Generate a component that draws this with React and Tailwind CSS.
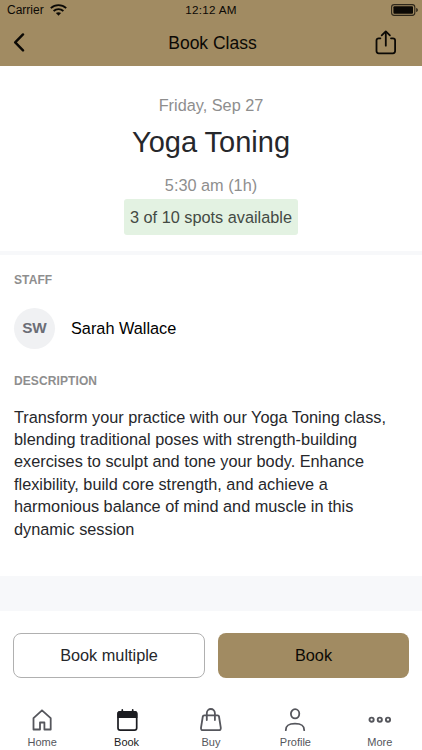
import React from "react";

const WifiIcon = () => (
  <svg width="17" height="12" viewBox="0 0 17 12" fill="none" stroke="#0b0905" strokeWidth="1.8">
    <path d="M0.8 4.1C5.2 0 11.8 0 16.2 4.1" />
    <path d="M3.6 7C6.4 4.4 10.6 4.4 13.4 7" />
    <path d="M8.5 11.7L5.9 9.1C7.3 7.8 9.7 7.8 11.1 9.1Z" fill="#0b0905" stroke="none" />
  </svg>
);

const BatteryIcon = () => (
  <svg width="28" height="12" viewBox="0 0 28 12" fill="none">
    <rect x="0.6" y="0.6" width="23.2" height="10.8" rx="2.6" stroke="#2d271b" strokeWidth="1.1" />
    <rect x="2.4" y="2.3" width="19.6" height="7.4" rx="1" fill="#0b0905" />
    <path d="M25.2 4C27.4 4.4 27.4 7.6 25.2 8Z" fill="#2d271b" />
  </svg>
);

const BackIcon = () => (
  <svg width="12" height="20" viewBox="0 0 12 20" fill="none" stroke="#0b0905" strokeWidth="2.4" strokeLinecap="round" strokeLinejoin="round">
    <path d="M10 1.4L2.2 9.4L10 17.4" />
  </svg>
);

const ShareIcon = () => (
  <svg width="22" height="26" viewBox="0 0 22 26" fill="none" stroke="#0b0905" strokeWidth="1.8" strokeLinecap="round" strokeLinejoin="round">
    <path d="M5.4 8.3H3.7A2.2 2.2 0 0 0 1.5 10.5V21.1A2.2 2.2 0 0 0 3.7 23.3H17.9A2.2 2.2 0 0 0 20.1 21.1V10.5A2.2 2.2 0 0 0 17.9 8.3H16" />
    <path d="M10.8 15.7V2" />
    <path d="M6.7 5.4L10.8 1.4L14.9 5.4" />
  </svg>
);

const HomeIcon = () => (
  <svg width="24" height="24" viewBox="0 0 24 24" fill="none" stroke="#55565c" strokeWidth="1.8" strokeLinejoin="round">
    <path d="M3.5 10.2L12 2.3L20.7 10.2V21.5H14.4V14.5H10V21.5H3.5Z" />
  </svg>
);

const BookIcon = () => (
  <svg width="24" height="24" viewBox="0 0 24 24" fill="none" stroke="#1b1c21" strokeWidth="1.7" strokeLinecap="round">
    <rect x="3" y="3.9" width="18.7" height="18.2" rx="2.2" />
    <path d="M2.4 9.9V5.8A2.6 2.6 0 0 1 5 3.1H19.7A2.6 2.6 0 0 1 22.4 5.8V9.9Z" fill="#1b1c21" stroke="none" />
    <path d="M7.3 1.9V4M17.7 1.9V4" />
  </svg>
);

const BuyIcon = () => (
  <svg width="24" height="24" viewBox="0 0 24 24" fill="none" stroke="#55565c" strokeWidth="1.8" strokeLinecap="round" strokeLinejoin="round">
    <path d="M5.2 7.3H18.6Q19.8 7.3 20 8.5L21.8 19.9Q22 22.1 19.9 22.1H3.9Q1.8 22.1 2 19.9L3.8 8.5Q4 7.3 5.2 7.3Z" />
    <path d="M7.8 12V5.2C7.8 -0.4 15.9 -0.4 15.9 5.2V12" />
  </svg>
);

const ProfileIcon = () => (
  <svg width="24" height="24" viewBox="0 0 24 24" fill="none" stroke="#55565c" strokeWidth="1.8" strokeLinecap="round">
    <ellipse cx="12.1" cy="5.8" rx="4.2" ry="4.6" />
    <path d="M2.8 22.2C2.8 17.2 5.6 15.6 12 15.6C18.4 15.6 21.2 17.2 21.2 22.2" />
  </svg>
);

const MoreIcon = () => (
  <svg width="24" height="24" viewBox="0 0 24 24" fill="none" stroke="#55565c" strokeWidth="1.9">
    <circle cx="3.6" cy="11.7" r="2.1" />
    <circle cx="11.8" cy="11.7" r="2.1" />
    <circle cx="20" cy="11.7" r="2.1" />
  </svg>
);

const tabs = [
  { label: "Home", icon: HomeIcon },
  { label: "Book", icon: BookIcon, active: true },
  { label: "Buy", icon: BuyIcon },
  { label: "Profile", icon: ProfileIcon },
  { label: "More", icon: MoreIcon },
];

const descriptionLines = [
  "Transform your practice with our Yoga Toning class,",
  "blending traditional poses with strength-building",
  "exercises to sculpt and tone your body. Enhance",
  "flexibility, build core strength, and achieve a",
  "harmonious balance of mind and muscle in this",
  "dynamic session",
];

const Header = () => (
  <header className="h-[66px] bg-[#a18b62] text-[#0b0905]">
    <div className="grid h-5 grid-cols-[1fr_auto_1fr] items-center pl-[7px] pr-[3px]">
      <div className="flex items-center gap-1.5 text-[12px] leading-5">
        <span>Carrier</span>
        <WifiIcon />
      </div>
      <span className="pr-1 text-[11.7px] leading-[18px] tracking-[0.25px]">12:12 AM</span>
      <div className="flex justify-end">
        <BatteryIcon />
      </div>
    </div>
    <div className="grid h-[46px] grid-cols-[1fr_auto_1fr] items-center pl-[13px] pr-[25px]">
      <button type="button" aria-label="Back">
        <BackIcon />
      </button>
      <h1 className="pl-[15px] text-[17.5px] leading-5">Book Class</h1>
      <button type="button" aria-label="Share" className="justify-self-end">
        <ShareIcon />
      </button>
    </div>
  </header>
);

const ClassSummary = () => (
  <section className="flex h-[185px] flex-col items-center pt-[28px] text-[16.3px] text-[#8e8e8e]">
    <p className="leading-[22px]">Friday, Sep 27</p>
    <h2 className="mt-[6px] text-[29px] leading-10 text-[#26272b]">Yoga Toning</h2>
    <p className="mt-[12px] leading-[22px]">5:30 am (1h)</p>
    <p className="mt-[3px] h-9 rounded-[3px] bg-[#e3f2e2] px-[5.5px] leading-9 text-[#434a44]">3 of 10 spots available</p>
  </section>
);

const ClassDetails = () => (
  <section className="h-[321px] px-3.5 pt-[15px]">
    <h3 className="text-[12px] font-bold leading-5 tracking-[0.1px] text-[#8e8e8e]">STAFF</h3>
    <div className="mt-[18px] flex items-center gap-4">
      <div className="flex h-[41px] w-[41px] items-center justify-center rounded-full bg-[#f0f1f3] text-[15.3px] font-bold text-[#6b6d76]">
        SW
      </div>
      <span className="text-[16.3px]">Sarah Wallace</span>
    </div>
    <h3 className="mt-[22px] text-[12px] font-bold leading-5 tracking-[0.1px] text-[#8e8e8e]">DESCRIPTION</h3>
    <p className="mt-[14.6px] whitespace-nowrap text-[16.3px] leading-[22.4px] text-[#26272b]">
      {descriptionLines.map((line) => (
        <span key={line} className="block">
          {line}
        </span>
      ))}
    </p>
  </section>
);

const Actions = () => (
  <div className="flex gap-[13px] px-[13px] pt-[22px] text-[16.3px]">
    <button type="button" className="h-[45px] w-[192px] rounded-lg border border-[#b0b0b0] text-[#26272b]">
      Book multiple
    </button>
    <button type="button" className="h-[45px] w-[191px] rounded-lg bg-[#a18b62] text-[#0b0905]">
      Book
    </button>
  </div>
);

const TabBar = () => (
  <nav className="mt-[30px] grid grid-cols-5">
    {tabs.map(({ label, icon: Icon, active }) => (
      <button key={label} type="button" className="flex flex-col items-center gap-[3px]">
        <Icon />
        <span className={active ? "text-[11px] leading-[14px] text-[#1b1c21]" : "text-[11px] leading-[14px] text-[#55565c]"}>
          {label}
        </span>
      </button>
    ))}
  </nav>
);

const App = () => {
  return (
    <main className="h-[750px] w-[422px] overflow-hidden bg-white font-['Liberation_Sans',Arial,sans-serif] text-black">
      <Header />
      <ClassSummary />
      <div className="h-1 bg-[#f7f8fa]" />
      <ClassDetails />
      <div className="h-[35px] bg-[#f7f8fa]" />
      <Actions />
      <TabBar />
    </main>
  );
};

export default App;
